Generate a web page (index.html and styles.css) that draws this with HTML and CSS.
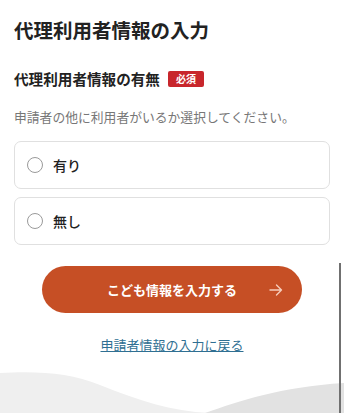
FILE: index.html
```html
<!DOCTYPE html>
<html lang="ja">
<head>
<meta charset="UTF-8">
<meta name="viewport" content="width=device-width, initial-scale=1.0">
<title>代理利用者情報の入力</title>
<link rel="stylesheet" href="styles.css">
</head>
<body>
<div class="page">
    <h1 class="title">代理利用者情報の入力</h1>

    <div class="field">
        <h2 class="label">代理利用者情報の有無<span class="badge">必須</span></h2>
        <p class="hint">申請者の他に利用者がいるか選択してください。</p>

        <label class="option">
            <input type="radio" name="proxy" value="yes">
            <span class="radio"></span>
            <span class="option-text">有り</span>
        </label>
        <label class="option">
            <input type="radio" name="proxy" value="no">
            <span class="radio"></span>
            <span class="option-text">無し</span>
        </label>
    </div>

    <div class="actions">
        <button class="btn-next" type="button">
            <span>こども情報を入力する</span>
            <svg class="arrow" width="14" height="12" viewBox="0 0 14 12">
                <path d="M1 6H12.5M7.5 1L12.5 6L7.5 11" fill="none" stroke="currentColor" stroke-width="1.4" stroke-linecap="round" stroke-linejoin="round"/>
            </svg>
        </button>
        <a class="back" href="#">申請者情報の入力に戻る</a>
    </div>
</div>

<svg class="waves" width="344" height="58" viewBox="0 0 344 58" preserveAspectRatio="none">
    <path d="M0 18C40 16 70 18 100 30C140 46 170 56 210 58L0 58Z" fill="#efefef"/>
    <path d="M205 58C240 46 280 32 344 28L344 58Z" fill="#e2e2e2"/>
</svg>

<div class="scrollbar"></div>
</body>
</html>
```

FILE: styles.css
```css
html, body {
    margin: 0;
    padding: 0;
    background: #fff;
}
body {
    font-family: "Noto Sans CJK JP", "Noto Sans", sans-serif;
    color: #222;
    width: 344px;
    min-height: 413px;
    position: relative;
    overflow: hidden;
}
.page {
    padding: 16px 14px 0;
}
.title {
    margin: 0;
    font-size: 19.5px;
    line-height: 28px;
    font-weight: 700;
}
.field {
    margin-top: 24px;
}
.label {
    margin: 0;
    font-size: 14.6px;
    line-height: 22px;
    font-weight: 700;
    display: flex;
    align-items: center;
}
.badge {
    display: inline-block;
    margin-left: 8px;
    padding: 0 8px;
    height: 16px;
    line-height: 16px;
    font-size: 10px;
    font-weight: 700;
    color: #fff;
    background: #c8262c;
    border-radius: 2px;
}
.hint {
    margin: 17px 0 14px;
    font-size: 12.8px;
    line-height: 20px;
    color: #777;
}
.option {
    display: flex;
    align-items: center;
    height: 46px;
    padding: 0 12px;
    border: 1px solid #e0e0e0;
    border-radius: 7px;
    margin-bottom: 8px;
    cursor: pointer;
}
.option input {
    display: none;
}
.radio {
    width: 14px;
    height: 14px;
    border: 1px solid #9a9a9a;
    border-radius: 50%;
    margin-right: 10px;
}
.option-text {
    font-size: 14px;
    font-weight: 500;
}
.actions {
    display: flex;
    flex-direction: column;
    align-items: center;
    margin-top: 21px;
}
.btn-next {
    position: relative;
    width: 260px;
    height: 47px;
    border: none;
    border-radius: 24px;
    background: #c64f25;
    color: #fff;
    font-family: inherit;
    font-size: 13px;
    font-weight: 700;
    cursor: pointer;
}
.btn-next .arrow {
    position: absolute;
    right: 19px;
    top: 18px;
    color: #f6cdbb;
}
.back {
    margin-top: 22px;
    font-size: 13px;
    line-height: 20px;
    color: #2f6f92;
    text-decoration: underline;
}
.waves {
    display: block;
    position: absolute;
    left: 0;
    bottom: 0;
}
.scrollbar {
    position: absolute;
    left: 339px;
    top: 263px;
    width: 2px;
    height: 150px;
    background: #707070;
}
```
